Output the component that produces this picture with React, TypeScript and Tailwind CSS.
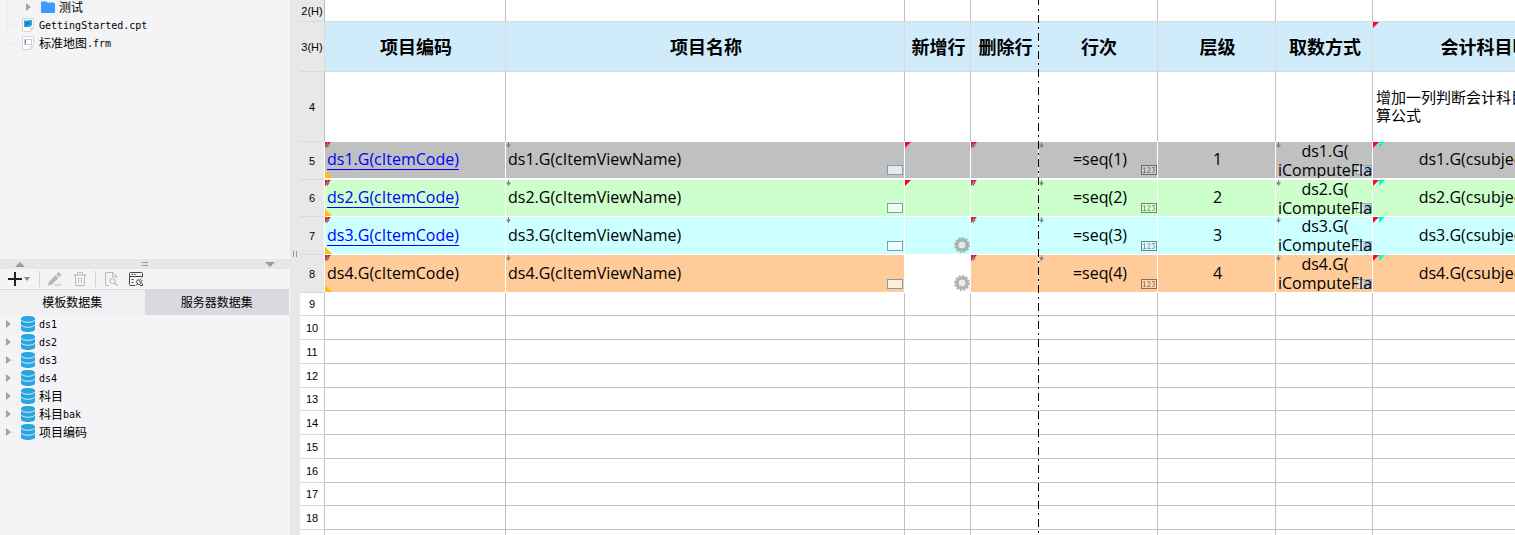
import { ReactNode } from "react";
import clsx from "clsx";

type Dataset = { cjk?: string; latin?: string };

const DATASETS: Dataset[] = [
  { latin: "ds1" },
  { latin: "ds2" },
  { latin: "ds3" },
  { latin: "ds4" },
  { cjk: "科目" },
  { cjk: "科目", latin: "bak" },
  { cjk: "项目编码" },
];

const HEADERS = ["项目编码", "项目名称", "新增行", "删除行", "行次", "层级", "取数方式"];

const DATA_ROWS = [
  { no: 5, ds: "ds1", level: 1, height: "h-[38px]", fill: "bg-[#c0c0c0]", link: true, gear: false },
  { no: 6, ds: "ds2", level: 2, height: "h-[37px]", fill: "bg-[#ccffcc]", link: true, gear: false },
  { no: 7, ds: "ds3", level: 3, height: "h-[38px]", fill: "bg-[#ccffff]", link: true, gear: true },
  { no: 8, ds: "ds4", level: 4, height: "h-[38px]", fill: "bg-[#ffcc99]", link: false, gear: true },
];

const EMPTY_ROWS = [9, 10, 11, 12, 13, 14, 15, 16, 17, 18, 19];
// these rows come out one pixel shorter than the others
const SHORT_ROWS = [9, 13, 17];

function Label({ cjk, latin }: Dataset) {
  return (
    <span className="flex items-center pt-[2px] whitespace-nowrap text-black">
      {cjk && <span className="text-xs">{cjk}</span>}
      {latin && (
        <span className="font-['DejaVu_Sans_Mono',monospace] text-[10px] leading-3">{latin}</span>
      )}
    </span>
  );
}

function Expander() {
  return (
    <svg className="h-2 w-[6px] shrink-0" viewBox="0 0 6 8" fill="#a3a3a3">
      <path d="M0 0 L5 4 L0 8Z" />
    </svg>
  );
}

function FolderIcon() {
  return (
    <svg className="h-3 w-[14px] shrink-0" viewBox="0 0 14 12">
      <path d="M0 1.5 Q0 .5 1 .5 H5.5 L7 2 H13 Q14 2 14 3 V11 Q14 12 13 12 H1 Q0 12 0 11Z" fill="#3d9aff" />
      <path d="M7 1 H13 L12 2 H8Z" fill="#8cc4ff" />
    </svg>
  );
}

function FileIcon({ filled }: { filled?: boolean }) {
  return (
    <svg className="h-[14px] w-3 shrink-0" viewBox="0 0 12 14">
      <path d="M.5 .5 H11.5 V10 L8.5 13.5 H.5Z" fill="#fff" stroke="#d4d4d4" />
      <path d="M11.5 10 H8.5 V13.5Z" fill="#d0d0d0" />
      {filled ? (
        <>
          <path d="M2 2 H10 V7 L8 9 H2Z" fill="#2aa3e8" />
          <path d="M4.5 8.5 V4.5 H7 V7" fill="none" stroke="#0b5fb0" />
          <path d="M2.5 2.5 H6" stroke="#8fdcff" />
        </>
      ) : (
        <>
          <rect x="2.5" y="3.5" width="7" height="5" fill="#fff" stroke="#c3cbd2" />
          <rect x="3" y="4" width="1" height="4" fill="#3d9ad6" />
        </>
      )}
    </svg>
  );
}

function DatabaseIcon() {
  return (
    <svg className="h-4 w-[14px] shrink-0" viewBox="0 0 14 16">
      <path d="M0 2.5 C0 -.8 14 -.8 14 2.5 V13.5 C14 16.8 0 16.8 0 13.5Z" fill="#2ba4e2" />
      <path d="M0 4 C2 7 12 7 14 4 M0 9 C2 12 12 12 14 9" fill="none" stroke="#d9f0fb" strokeWidth="1" />
    </svg>
  );
}

function RedCorner() {
  return (
    <svg className="absolute top-0 left-0 size-[6px]" viewBox="0 0 6 6">
      <path d="M0 0 H6 L0 6Z" fill="#ff0033" />
    </svg>
  );
}

function CyanCorner() {
  return (
    <svg className="absolute top-0 left-[6px] size-[6px]" viewBox="0 0 6 6">
      <path d="M0 0 H6 L0 6Z" fill="#00ffcc" />
    </svg>
  );
}

function YellowCorner() {
  return (
    <svg className="absolute bottom-0 left-0 size-[7px]" viewBox="0 0 7 7">
      <path d="M0 0 L7 7 H0Z" fill="#ffc000" />
    </svg>
  );
}

function DownMark() {
  return (
    <svg className="absolute top-0 left-0 size-[6px]" viewBox="0 0 6 6">
      <path d="M2.5 0 V5.5" stroke="#7f7f7f" />
      <path d="M0 2.5 H5 L2.5 5.8Z" fill="#7f7f7f" />
    </svg>
  );
}

function TextBadge() {
  return (
    <span className="absolute right-px bottom-[3px] h-[10px] w-4 border border-[#7f9db9] bg-white/65" />
  );
}

function NumberBadge() {
  return (
    <svg className="absolute right-0 bottom-[3px] h-[10px] w-4 opacity-60" viewBox="0 0 16 10" fill="none" stroke="#333">
      <rect x=".5" y=".5" width="15" height="9" fill="#fff" fillOpacity=".3" />
      <path d="M2 3.5 L3.5 2.5 V8 M2 7.5 H5 M6.3 3.5 Q6.5 2.5 8 2.5 Q9.5 2.7 9 4.2 L6.5 7.5 H9.7 M11 2.5 H13.7 L12.3 4.5 Q14 4.8 13.7 6.5 Q13 7.8 11 7.2" strokeWidth=".8" />
    </svg>
  );
}

function ComboBadge() {
  return (
    <svg className="absolute right-0 bottom-[3px] h-[10px] w-4 opacity-75" viewBox="0 0 16 10">
      <rect x=".5" y=".5" width="15" height="9" fill="#fff" fillOpacity=".5" stroke="#7f9db9" />
      <rect x="7" y="1" width="8" height="8" fill="#a9cdf0" />
      <path d="M9 3.5 L11 6 L13 3.5" fill="none" stroke="#4d6185" />
    </svg>
  );
}

function GearBadge() {
  return (
    <svg className="absolute right-0 bottom-px size-4" viewBox="0 0 16 16" fill="none" opacity=".75">
      <circle cx="8" cy="8" r="7.2" stroke="#999" strokeWidth="1.6" strokeDasharray="2.2 1.57" />
      <circle cx="8" cy="8" r="5" stroke="#999" strokeWidth="3.5" />
      <circle cx="8" cy="8" r="3.3" fill="#e6e6e6" />
    </svg>
  );
}

function ToolButton({ label, className, children }: { label: string; className?: string; children: ReactNode }) {
  return (
    <button type="button" aria-label={label} className={clsx("flex items-center", className)}>
      {children}
    </button>
  );
}

function Toolbar() {
  return (
    <div className="flex h-[21px] items-center border-b border-[#d8d9dc] pl-2">
      <ToolButton label="新建" className="gap-[2px]">
        <svg className="size-[14px]" viewBox="0 0 14 14" stroke="#222" strokeWidth="2">
          <path d="M7 0 V14 M0 7 H14" />
        </svg>
        <svg className="h-1 w-[6px]" viewBox="0 0 6 4" fill="#888">
          <path d="M0 0 H6 L3 4Z" />
        </svg>
      </ToolButton>
      <span className="ml-[9px] h-4 w-px bg-[#d4d4d8]" />
      <ToolButton label="编辑" className="ml-2">
        <svg className="size-[14px]" viewBox="0 0 14 14" fill="#b9b9bb">
          <path d="M0 13.5 L1 9.5 L7.5 3 L10.5 6 L4 12.5Z M8.3 2.2 L10.5 0 L13.5 3 L11.3 5.2Z M7 12.5 H13.5 V13.5 H6Z" />
        </svg>
      </ToolButton>
      <ToolButton label="删除" className="ml-[11px]">
        <svg className="size-[14px]" viewBox="0 0 14 14" fill="none" stroke="#b9b9bb">
          <path d="M0 3 H14 M4.5 3 V.5 H9.5 V3 M2.5 3 V13.5 H11.5 V3 M5.5 5.5 V11 M8.5 5.5 V11" />
        </svg>
      </ToolButton>
      <span className="ml-2 h-4 w-px bg-[#d4d4d8]" />
      <ToolButton label="预览" className="ml-[9px]">
        <svg className="h-[14px] w-[13px]" viewBox="0 0 13 14" fill="none" stroke="#b9b9bb">
          <path d="M4 13.5 H.5 V.5 H8 L11.5 4 V6 M7.5 .5 V4.5 H11.5" />
          <circle cx="7.5" cy="9" r="2.7" />
          <path d="M9.5 11 L12.2 13.6" strokeWidth="1.4" />
        </svg>
      </ToolButton>
      <ToolButton label="连接设置" className="ml-[11px]">
        <svg className="size-[14px]" viewBox="0 0 14 14" fill="none" stroke="#444">
          <path d="M6 13.5 H1.5 Q.5 13.5 .5 12.5 V1.5 Q.5 .5 1.5 .5 H12.5 Q13.5 .5 13.5 1.5 V5 M.5 4.5 H13.5 M2.5 2.5 H4 M5 2.5 H6.5 M2.5 7.5 H4.5 M2.5 10.5 H4.5" />
          <path d="M7 13.5 L8.5 12 Q6 9 9 7.5 L12.5 11 Q10.5 13.5 8.5 12 M10 8.5 L12 6.5 M11.5 10 L13.5 8 M11 13.5 H13.5 V11.5" />
        </svg>
      </ToolButton>
    </div>
  );
}

function Sidebar() {
  return (
    <aside className="flex w-[290px] shrink-0 flex-col bg-[#f4f4f7]">
      <div className="h-[259px] shrink-0 overflow-hidden">
        <ul className="-mt-[2px] ml-[7px] w-40">
          <li className="flex h-[18px] items-center border-l border-[#ececf0] pl-[18px]">
            <Expander />
            <span className="mr-1 ml-[9px] flex">
              <FolderIcon />
            </span>
            <Label cjk="测试" />
          </li>
          <li className="flex h-[18px] items-center border-l border-[#ececf0]">
            <span className="mr-[5px] h-px w-[9px] bg-[#ececf0]" />
            <FileIcon filled />
            <span className="ml-[5px]">
              <Label latin="GettingStarted.cpt" />
            </span>
          </li>
          <li className="flex h-[18px] items-center">
            <span className="mr-[5px] h-px w-[10px] bg-[#ececf0]" />
            <FileIcon />
            <span className="ml-[5px]">
              <Label cjk="标准地图" latin=".frm" />
            </span>
          </li>
        </ul>
      </div>

      <div className="flex h-[10px] shrink-0 items-center justify-between bg-[#e8e8e8] px-[15px]">
        <svg className="h-[5px] w-[10px]" viewBox="0 0 10 5" fill="#9a9a9a">
          <path d="M5 0 L10 5 H0Z" />
        </svg>
        <span className="h-1 w-[6px] border-y border-[#9a9a9a]" />
        <svg className="h-[5px] w-[10px]" viewBox="0 0 10 5" fill="#9a9a9a">
          <path d="M0 0 H10 L5 5Z" />
        </svg>
      </div>

      <Toolbar />

      <div className="mr-px flex h-[25px] shrink-0 text-xs text-black">
        <button type="button" className="flex-1 bg-[#f0f0f3]">
          模板数据集
        </button>
        <button type="button" className="flex-1 bg-[#d9dadf]">
          服务器数据集
        </button>
      </div>

      <ul>
        {DATASETS.map((item, index) => (
          <li key={index} className="flex h-[18px] items-center pl-[6px]">
            <Expander />
            <span className="mr-[5px] h-px w-1 bg-[#ececf0]" />
            <DatabaseIcon />
            <span className="ml-1">
              <Label {...item} />
            </span>
          </li>
        ))}
      </ul>
    </aside>
  );
}

function RowHead({ no, className }: { no: string | number; className?: string }) {
  return (
    <th
      scope="row"
      className={clsx(
        "border-r border-b border-b-[#dadada] p-0 text-center font-['Liberation_Sans',sans-serif] text-[11px] leading-3 font-normal",
        className,
      )}
    >
      {no}
    </th>
  );
}

function Cell({ className, children }: { className?: string; children?: ReactNode }) {
  return <td className={clsx("relative border-r border-b p-0", className)}>{children}</td>;
}

function HeadCell({ children }: { children: ReactNode }) {
  return (
    <th
      scope="col"
      className="relative border-r border-b border-[#dadada] bg-[#d0ebfa] py-0 pr-0 pl-[2px] text-lg leading-5 font-bold whitespace-nowrap"
    >
      {children}
    </th>
  );
}

function Sheet() {
  return (
    <main className="relative min-w-0 flex-1 overflow-hidden bg-white">
      <table className="w-px table-fixed border-separate border-spacing-0 text-base leading-5 text-black">
        <colgroup>
          <col className="w-[25px]" />
          <col className="w-[181px]" />
          <col className="w-[399px]" />
          <col className="w-[66px]" />
          <col className="w-[68px]" />
          <col className="w-[119px]" />
          <col className="w-[118px]" />
          <col className="w-[97px]" />
          <col className="w-[242px]" />
        </colgroup>
        <tbody>
          <tr className="h-[22px]">
            <RowHead no="2(H)" className="border-r-[#c0c0c0] bg-[#e8e8e8]" />
            {[...HEADERS, "last"].map((name) => (
              <Cell key={name} className="border-r-[#c0c0c0] border-b-[#dadada]" />
            ))}
          </tr>

          <tr className="h-[50px]">
            <RowHead no="3(H)" className="border-r-[#dadada] bg-[#e8e8e8]" />
            {HEADERS.map((name) => (
              <HeadCell key={name}>{name}</HeadCell>
            ))}
            <HeadCell>
              <RedCorner />
              会计科目明细
            </HeadCell>
          </tr>

          <tr className="h-[70px]">
            <RowHead no={4} className="border-r-[#c0c0c0] bg-[#e8e8e8]" />
            {HEADERS.map((name) => (
              <Cell key={name} className="border-r-[#c0c0c0] border-b-white" />
            ))}
            <Cell className="border-r-[#c0c0c0] border-b-white pb-[2px] pl-[3px] text-[15px] leading-[18px] whitespace-nowrap">
              增加一列判断会计科目
              <br />
              算公式
            </Cell>
          </tr>

          {DATA_ROWS.map((row) => {
            const fill = clsx("border-white", row.fill, row.no === 5 && "border-b-2");
            const cell = clsx(fill, "pb-[2px]");
            return (
              <tr key={row.no} className={row.height}>
                <RowHead no={row.no} className="border-r-white bg-[#e8e8e8]" />
                <Cell className={clsx(cell, "pl-[2px]")}>
                  <RedCorner />
                  <DownMark />
                  <YellowCorner />
                  {row.link ? (
                    <a href="#" className="text-[#0000ff] underline decoration-1 underline-offset-4">
                      {row.ds}.G(cItemCode)
                    </a>
                  ) : (
                    `${row.ds}.G(cItemCode)`
                  )}
                </Cell>
                <Cell className={clsx(cell, "pl-[2px]")}>
                  <DownMark />
                  {row.ds}.G(cItemViewName)
                  <TextBadge />
                </Cell>
                <Cell className={row.no === 8 ? "border-white bg-white" : fill}>
                  {row.gear ? <GearBadge /> : <RedCorner />}
                </Cell>
                <Cell className={fill}>
                  <RedCorner />
                  <DownMark />
                </Cell>
                <Cell className={clsx(cell, "pl-1 text-center")}>
                  <DownMark />
                  =seq({row.level})
                  <NumberBadge />
                </Cell>
                <Cell className={clsx(cell, "pl-[2px] text-center")}>{row.level}</Cell>
                <Cell className={clsx(fill, "text-center align-top")}>
                  <DownMark />
                  <ComboBadge />
                  <div className="relative h-9 overflow-hidden pl-[2px] leading-[19px] whitespace-nowrap">
                    <div>{row.ds}.G(</div>
                    <div className="text-left">iComputeFla</div>
                  </div>
                </Cell>
                <Cell className={clsx(cell, "pl-[2px] text-center")}>
                  <RedCorner />
                  <CyanCorner />
                  {row.ds}.G(csubjectCode)
                </Cell>
              </tr>
            );
          })}

          {EMPTY_ROWS.map((no) => (
            <tr key={no} className={SHORT_ROWS.includes(no) ? "h-[23px]" : "h-6"}>
              <RowHead no={no} className="border-r-[#c0c0c0] bg-white" />
              {[...HEADERS, "last"].map((name) => (
                <Cell key={name} className="border-[#c0c0c0]" />
              ))}
            </tr>
          ))}
        </tbody>
      </table>

      {/* page break guide */}
      <div className="absolute inset-y-0 left-[738px] w-px bg-[repeating-linear-gradient(to_bottom,#000_0px,#000_5px,#fff_5px,#fff_9px,#000_9px,#000_11px,#fff_11px,#fff_15px,#000_15px,#000_18px)]" />
    </main>
  );
}

export default function App() {
  return (
    <div className="flex h-screen overflow-hidden bg-white font-['Open_Sans','Noto_Sans_CJK_SC',sans-serif]">
      <Sidebar />
      <div className="w-[10px] shrink-0 bg-[#e8e8e8] pt-[251px] pl-[3px]">
        <div className="h-[6px] w-1 border-x border-[#9a9a9a]" />
      </div>
      <Sheet />
    </div>
  );
}
